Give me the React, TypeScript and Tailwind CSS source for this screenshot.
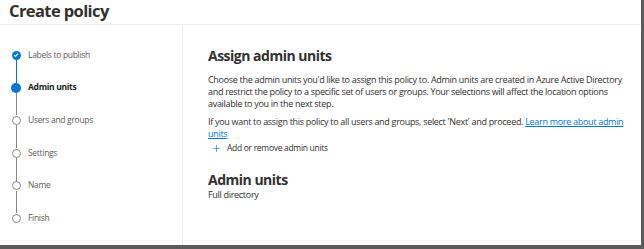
import { Plus } from "lucide-react";

const steps = [
  { label: "Labels to publish", state: "done" },
  { label: "Admin units", state: "current" },
  { label: "Users and groups", state: "todo" },
  { label: "Settings", state: "todo" },
  { label: "Name", state: "todo" },
  { label: "Finish", state: "todo" },
];

function StepDot({ state }: { state: string }) {
  if (state === "done") {
    return (
      <div className="w-[9px] h-[9px] rounded-full bg-[#0078d4] flex items-center justify-center">
        <svg width="6" height="6" viewBox="0 0 6 6">
          <path d="M1 3.1 L2.4 4.4 L5 1.6" stroke="white" strokeWidth="1.1" fill="none" />
        </svg>
      </div>
    );
  }
  if (state === "current") {
    return <div className="w-[10px] h-[10px] rounded-full bg-[#0078d4]" />;
  }
  return <div className="w-[9px] h-[9px] rounded-full border border-[#8a8886] bg-white" />;
}

export default function App() {
  return (
    <div
      className="w-[644px] h-[249px] bg-white text-[#323130]"
      style={{ fontFamily: '"Open Sans", "Noto Sans", sans-serif' }}
    >
      <div className="w-[644px] h-[249px] border-r-[3px] border-b-[4px] border-[#5c5c5c] flex flex-col overflow-hidden">
        <div className="h-[25px] shrink-0 border-b border-[#f0efee] pl-[9px] pt-[1px]">
          <h1 className="text-[16.5px] font-bold leading-[20px] tracking-[-0.6px]">
            Create policy
          </h1>
        </div>
        <div className="flex flex-1">
          <div className="w-[183px] shrink-0 border-r border-[#f0efee] pt-[25px] pl-[11px]">
            {steps.map((s, i) => (
              <div key={s.label}>
                <div className="flex items-center h-[10px]">
                  <div className="w-[10px] flex justify-center">
                    <StepDot state={s.state} />
                  </div>
                  <span
                    className={
                      s.state === "current"
                        ? "ml-[7px] text-[8.5px] font-bold text-[#201f1e] tracking-[-0.3px]"
                        : "ml-[7px] text-[8.5px] text-[#605e5c] tracking-[-0.3px]"
                    }
                  >
                    {s.label}
                  </span>
                </div>
                {i < steps.length - 1 && (
                  <div
                    className={
                      i === 0
                        ? "ml-[4.5px] w-px h-[22.7px] bg-[#0078d4]"
                        : "ml-[4.5px] w-px h-[22.7px] bg-[#8a8886]"
                    }
                  />
                )}
              </div>
            ))}
          </div>
          <div className="flex-1 pl-[25px] pt-[22px] text-[9px] leading-[12px] tracking-[-0.3px]">
            <h2 className="text-[14px] font-bold leading-[18px] tracking-[-0.5px] mb-[9px]">
              Assign admin units
            </h2>
            <p>
              Choose the admin units you'd like to assign this policy to. Admin units are created in Azure Active Directory
              <br />
              and restrict the policy to a specific set of users or groups. Your selections will affect the location options
              <br />
              available to you in the next step.
            </p>
            <p className="mt-[6px]">
              If you want to assign this policy to all users and groups, select 'Next' and proceed.{" "}
              <a className="text-[#0078d4] underline">
                Learn more about admin
                <br />
                units
              </a>
            </p>
            <div className="flex items-center mt-[2px] ml-[3px] h-[12px]">
              <Plus size={11} strokeWidth={1.3} className="text-[#0078d4]" />
              <span className="ml-[5px] text-[8.5px]">Add or remove admin units</span>
            </div>
            <h2 className="text-[14px] font-bold leading-[18px] tracking-[-0.5px] mt-[17px]">
              Admin units
            </h2>
            <p className="leading-[12px]">Full directory</p>
          </div>
        </div>
      </div>
    </div>
  );
}
